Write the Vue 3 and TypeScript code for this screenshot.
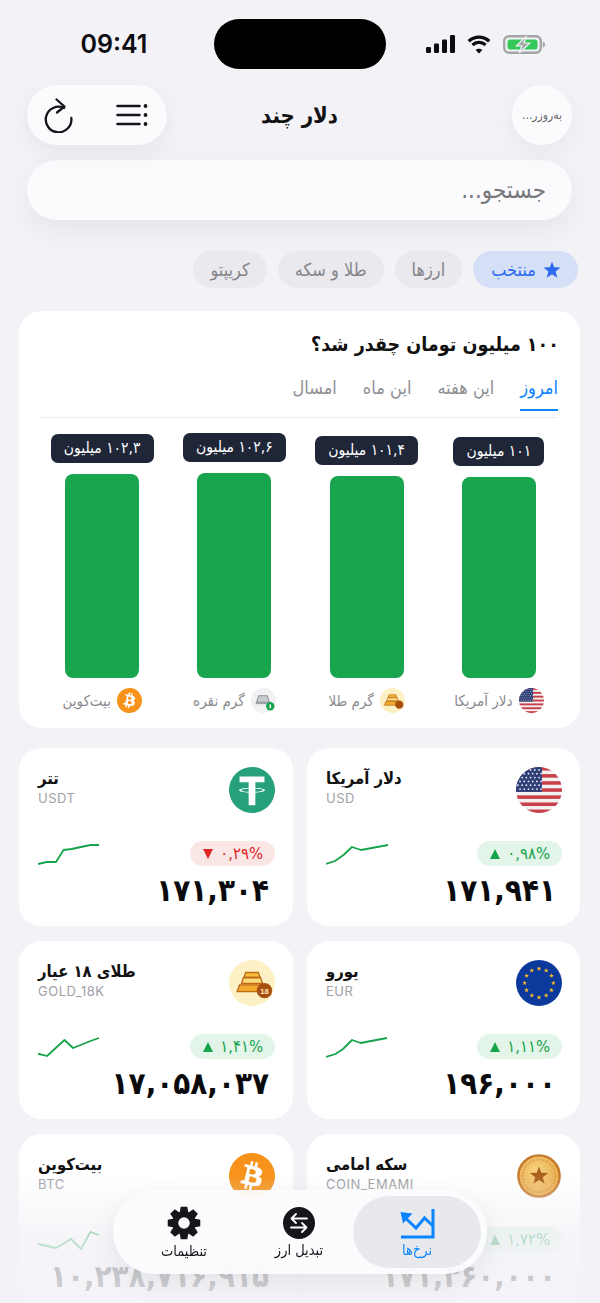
<template>
  <div class="screen" dir="rtl">
    <!-- shared icons, used by chart labels and rate cards -->
    <svg class="defs" aria-hidden="true">
      <defs>
        <clipPath id="round"><circle cx="24" cy="24" r="24" /></clipPath>
        <radialGradient id="coinFill" cx="45%" cy="40%" r="65%">
          <stop offset="0" stop-color="#f8d483" />
          <stop offset="1" stop-color="#e5a444" />
        </radialGradient>
      </defs>
      <symbol id="usd" viewBox="0 0 48 48">
        <g clip-path="url(#round)">
          <rect width="48" height="48" fill="#f4f1f1" />
          <rect v-for="y in [0, 7.4, 14.8, 22.2, 29.6, 37, 44.4]" :key="y" width="48" height="3.7" :y="y" fill="#c8414b" />
          <rect width="27" height="26" fill="#2f3f78" />
          <circle v-for="s in flagStars" :key="s.k" :cx="s.x" :cy="s.y" r="0.9" fill="#f4f4f8" />
        </g>
      </symbol>
      <symbol id="eur" viewBox="0 0 48 48">
        <circle cx="24" cy="24" r="24" fill="#0b3a9c" />
        <polygon v-for="s in euStars" :key="s.k" :points="s.points" fill="#f6b82a" />
      </symbol>
      <symbol id="usdt" viewBox="0 0 48 48">
        <circle cx="24" cy="24" r="24" fill="#26a17b" />
        <path d="M11 10h26v6H27.500v5.700c5.800.3 10 1.300 10 2.500s-4.200 2.200-10 2.500V40h-7V26.700c-5.800-.3-10-1.300-10-2.500s4.200-2.200 10-2.500V16H11z" fill="#fff" />
        <path d="M12.800 24.200c0-1 5-1.800 11.200-1.800s11.200.8 11.200 1.800-5 1.800-11.200 1.800-11.200-.8-11.200-1.800z" fill="#26a17b" />
        <rect x="20.500" y="22" width="7" height="5" fill="#fff" />
      </symbol>
      <symbol id="gold" viewBox="0 0 48 48">
        <circle cx="24" cy="24" r="24" fill="#fdf0c4" />
        <path d="M17.500 13h13l2 5h-17z" fill="#f6bd3f" stroke="#bd6a14" stroke-width="1.400" />
        <path d="M15 18.500h18l2 6H13z" fill="#fbd97d" stroke="#bd6a14" stroke-width="1.400" />
        <path d="M11 26h26l2.500 7h-31z" fill="#f2a92c" stroke="#bd6a14" stroke-width="1.400" />
        <circle cx="37" cy="32" r="8" fill="#a94f0e" />
      </symbol>
      <symbol id="silver" viewBox="0 0 48 48">
        <circle cx="24" cy="24" r="24" fill="#f0f1f3" />
        <path d="M15 15h16l5 14H10z" fill="#c9ccd1" stroke="#8d9198" stroke-width="2" />
        <rect x="10" y="26" width="26" height="5" fill="#9da1a8" />
        <circle cx="37" cy="35" r="8" fill="#16a34a" />
        <rect x="35.600" y="31" width="2.800" height="8" rx="1" fill="#fff" />
      </symbol>
      <symbol id="btc" viewBox="0 0 24 24">
        <circle cx="12" cy="12" r="11" fill="#fff" />
        <path fill="#f7931a" d="M23.638 14.904c-1.602 6.43-8.113 10.34-14.542 8.736C2.67 22.05-1.244 15.525.362 9.105 1.962 2.67 8.475-1.243 14.9.358c6.43 1.605 10.342 8.115 8.738 14.548v-.002zm-6.35-4.613c.24-1.59-.974-2.45-2.64-3.03l.54-2.153-1.315-.33-.525 2.107c-.345-.087-.705-.167-1.064-.25l.526-2.127-1.32-.33-.54 2.165c-.285-.067-.565-.132-.84-.2l-1.815-.45-.35 1.407s.975.225.955.236c.535.136.63.486.615.766l-1.477 5.92c-.075.166-.24.406-.614.314.015.02-.96-.24-.96-.24l-.66 1.51 1.71.426.93.242-.54 2.19 1.32.327.54-2.17c.36.1.705.19 1.05.273l-.51 2.154 1.32.33.545-2.19c2.24.427 3.93.257 4.64-1.774.57-1.637-.03-2.58-1.217-3.196.854-.193 1.5-.76 1.68-1.93h.01zm-3.01 4.22c-.404 1.64-3.157.75-4.05.53l.72-2.9c.896.23 3.757.67 3.33 2.37zm-.41-4.24c-.37 1.49-2.662.735-3.405.55l.654-2.64c.744.18 3.137.524 2.75 2.084v.006z" />
      </symbol>
      <symbol id="emami" viewBox="0 0 48 48">
        <circle cx="24" cy="24" r="21.500" fill="url(#coinFill)" stroke="#c47a2b" stroke-width="2.500" />
        <circle cx="24" cy="24" r="17" fill="none" stroke="#d08a35" stroke-width="1.200" stroke-dasharray="1.500 2" />
        <polygon :points="starPoints(24, 24, 10, 4.2)" fill="#a8601c" />
      </symbol>
    </svg>

    <div class="status" dir="ltr">
      <span class="time">09:41</span>
      <div class="island"></div>
      <div class="status-icons">
        <svg width="29" height="18" viewBox="0 0 29 18"><rect x="0" y="12" width="5" height="6" rx="1.200" /><rect x="8" y="8.500" width="5" height="9.500" rx="1.200" /><rect x="16" y="4.500" width="5" height="13.500" rx="1.200" /><rect x="24" y="0" width="5" height="18" rx="1.200" /></svg>
        <svg width="26" height="19" viewBox="0 0 26 19"><path d="M13 3.800c3.500 0 6.700 1.400 9.100 3.700l2.300-2.400A16.400 16.400 0 0 0 13 .5 16.400 16.400 0 0 0 1.600 5.100l2.300 2.400A13 13 0 0 1 13 3.800z" /><path d="M13 9.100c2.100 0 4 .8 5.400 2.100l2.300-2.400a11.100 11.100 0 0 0-15.400 0l2.300 2.400A7.800 7.800 0 0 1 13 9.100z" /><path d="M13 13.800c-1.300 0-2.400.5-3.300 1.300l3.300 3.500 3.300-3.500a4.700 4.700 0 0 0-3.300-1.300z" /></svg>
        <svg width="43" height="19" viewBox="0 0 43 19">
          <rect x="1.200" y="1.200" width="36.600" height="16.600" rx="5" fill="none" stroke="#a3a5a6" stroke-width="2.400" />
          <rect x="4.500" y="4.500" width="30" height="10" rx="2.500" fill="#34c759" />
          <path d="M39.800 6.500v6c1.400-.4 2.200-1.600 2.200-3s-.8-2.600-2.200-3z" fill="#a3a5a6" />
          <path d="M23.500 1 13.500 10.800h5.300L16.300 18 26.800 8h-5.700z" fill="#a3a5a6" stroke="#f2f2f7" stroke-width="1.200" />
        </svg>
      </div>
    </div>

    <header class="top-bar">
      <div class="top-start">
        <button class="update-btn">به‌روزر...</button>
      </div>
      <h1 class="app-title">دلار چند</h1>
      <div class="tools" dir="ltr">
        <svg class="tool-icon" width="30" height="36" viewBox="0 0 30 36" fill="none" stroke="#16161a" stroke-width="2.300" stroke-linecap="round" stroke-linejoin="round">
          <path d="M20 10.900A12.800 12.800 0 1 0 27.300 21" />
          <path d="M12.500 2.500 20.500 9.500 13 15.500" />
        </svg>
        <svg class="tool-icon" width="32" height="24" viewBox="0 0 32 24" stroke="#16161a" stroke-width="2.500" stroke-linecap="round">
          <path d="M1.500 3h22M1.500 12h22M1.500 21h22" />
          <circle cx="29.500" cy="3" r="1.900" fill="#16161a" stroke="none" />
          <circle cx="29.500" cy="12" r="1.900" fill="#16161a" stroke="none" />
          <circle cx="29.500" cy="21" r="1.900" fill="#16161a" stroke="none" />
        </svg>
      </div>
    </header>

    <div class="search"><span>جستجو...</span></div>

    <nav class="chips">
      <span v-for="c in chips" :key="c.label" class="chip" :class="{ on: c.on }">
        <svg v-if="c.on" width="18" height="18" viewBox="0 0 24 24"><polygon :points="starPoints(12, 12.5, 12, 5)" fill="#2f6bf0" /></svg>
        {{ c.label }}
      </span>
    </nav>

    <section class="convert-card">
      <h2 class="convert-title">۱۰۰ میلیون تومان چقدر شد؟</h2>
      <div class="tabs">
        <span v-for="(t, i) in tabs" :key="t" class="tab" :class="{ on: i === 0 }">{{ t }}</span>
      </div>
      <div class="bars">
        <div v-for="b in bars" :key="b.label" class="bar-col">
          <span class="bar-tag">{{ b.value }} میلیون</span>
          <div class="bar" :style="{ height: b.height + 'px' }"></div>
          <div class="bar-label">
            <svg width="25" height="25" viewBox="0 0 48 48"><use :href="'#' + b.icon" width="48" height="48" /></svg>
            <span>{{ b.label }}</span>
          </div>
        </div>
      </div>
    </section>

    <section class="rates">
      <article v-for="r in rates" :key="r.code" class="rate" dir="ltr">
        <div class="rate-head">
          <div class="rate-name">
            <strong dir="rtl">{{ r.name }}</strong>
            <small>{{ r.code }}</small>
          </div>
          <svg width="46" height="46" viewBox="0 0 48 48">
            <use :href="'#' + r.icon" width="48" height="48" />
            <text v-if="r.icon === 'gold'" x="37" y="35" text-anchor="middle" font-size="8" font-weight="700" fill="#ffe9bd" font-family="Liberation Sans, sans-serif">18</text>
          </svg>
        </div>
        <div class="rate-mid">
          <svg width="62" height="26" viewBox="0 0 62 26" fill="none"><polyline :points="r.spark" stroke="#16a34a" stroke-width="1.800" stroke-linejoin="round" /></svg>
          <span class="change" :class="{ down: r.down }">
            <i class="arrow"></i>{{ r.change }}%
          </span>
        </div>
        <div class="price">{{ r.price }}</div>
      </article>
    </section>

    <div class="fade"></div>

    <nav class="dock">
      <a class="dock-item active">
        <svg width="36" height="32" viewBox="0 0 36 32" fill="none" stroke="#0a84ff" stroke-width="3">
          <path d="M34 2v28H2" />
          <path d="M34 19 25.500 11 17 21 7 11.500" />
          <polygon points="1.500,5 13.500,6.500 4,16.500" fill="#0a84ff" stroke="none" />
        </svg>
        <span>نرخ‌ها</span>
      </a>
      <a class="dock-item swap">
        <svg width="32" height="32" viewBox="0 0 32 32" fill="none" stroke="#fff" stroke-width="1.800" stroke-linecap="round" stroke-linejoin="round">
          <circle cx="16" cy="16" r="16" fill="#16161a" stroke="none" />
          <path d="M24 11.500H8.500M13 7 8.500 11.500 13 16" />
          <path d="M8 20.500h15.500M19 16l4.500 4.500L19 25" />
        </svg>
        <span>تبدیل ارز</span>
      </a>
      <a class="dock-item settings">
        <svg width="34" height="34" viewBox="0 0 34 34"><path :d="gearPath" fill="#16161a" fill-rule="evenodd" /></svg>
        <span>تنظیمات</span>
      </a>
    </nav>
  </div>
</template>

<script setup lang="ts">
interface Rate {
  name: string
  code: string
  icon: string
  change: string
  down?: boolean
  price: string
  spark: string
}

const starPoints = (cx: number, cy: number, r: number, inner: number) => {
  const pts: string[] = []
  for (let i = 0; i < 10; i++) {
    const rad = i % 2 ? inner : r
    const a = (Math.PI / 5) * i - Math.PI / 2
    pts.push(`${(cx + rad * Math.cos(a)).toFixed(2)},${(cy + rad * Math.sin(a)).toFixed(2)}`)
  }
  return pts.join(' ')
}

const flagStars: { k: string; x: number; y: number }[] = []
for (let row = 0; row < 6; row++) {
  for (let col = 0; col < 6; col++) {
    flagStars.push({ k: `${row}-${col}`, x: 2 + col * 4.4 + (row % 2) * 2.2, y: 3 + row * 4 })
  }
}

const euStars = Array.from({ length: 12 }, (_, i) => {
  const a = (Math.PI / 6) * i
  return { k: i, points: starPoints(24 + 15 * Math.cos(a), 24 + 15 * Math.sin(a), 2.6, 1.1) }
})

// eight chunky teeth with a round hole
const buildGear = () => {
  const c = 17
  let d = ''
  for (let i = 0; i < 8; i++) {
    const a = (Math.PI / 4) * i - Math.PI / 2
    const p = (r: number, off: number) =>
      `${(c + r * Math.cos(a + off)).toFixed(2)} ${(c + r * Math.sin(a + off)).toFixed(2)}`
    d += `${i === 0 ? 'M' : 'L'}${p(11.8, -0.36)}L${p(16.6, -0.2)}L${p(16.6, 0.2)}L${p(11.8, 0.36)}`
  }
  return d + 'ZM17 11.2a5.8 5.8 0 1 0 0 11.6a5.8 5.8 0 1 0 0-11.6Z'
}
const gearPath = buildGear()

const chips = [
  { label: 'منتخب', on: true },
  { label: 'ارزها' },
  { label: 'طلا و سکه' },
  { label: 'کریپتو' }
]

const tabs = ['امروز', 'این هفته', 'این ماه', 'امسال']

const bars = [
  { value: '۱۰۱', height: 201, label: 'دلار آمریکا', icon: 'usd' },
  { value: '۱۰۱,۴', height: 202, label: 'گرم طلا', icon: 'gold' },
  { value: '۱۰۲,۶', height: 205, label: 'گرم نقره', icon: 'silver' },
  { value: '۱۰۲,۳', height: 204, label: 'بیت‌کوین', icon: 'btc' }
]

const rates: Rate[] = [
  { name: 'دلار آمریکا', code: 'USD', icon: 'usd', change: '۰,۹۸', price: '۱۷۱,۹۴۱', spark: '0,23 9,20 17.5,14 26,6 35,9 62,4' },
  { name: 'تتر', code: 'USDT', icon: 'usdt', change: '۰,۲۹', down: true, price: '۱۷۱,۳۰۴', spark: '0,23 8.5,21 18,21 25.5,9 33.5,8 52.5,4 61,4' },
  { name: 'یورو', code: 'EUR', icon: 'eur', change: '۱,۱۱', price: '۱۹۶,۰۰۰', spark: '0,23 9.5,20 17,15 26,6 34.5,9 61,4' },
  { name: 'طلای ۱۸ عیار', code: 'GOLD_18K', icon: 'gold', change: '۱,۴۱', price: '۱۷,۰۵۸,۰۳۷', spark: '0,19.7 9,22 26.5,6 35,14 52.5,7 61,4' },
  { name: 'سکه امامی', code: 'COIN_EMAMI', icon: 'emami', change: '۱,۷۲', price: '۱۷۱,۳۶۰,۰۰۰', spark: '0,23 17,20 26,14 35,10 61,4' },
  { name: 'بیت‌کوین', code: 'BTC', icon: 'btc', change: '۲,۳۸', price: '۱۰,۲۳۸,۷۱۶,۹۱۵', spark: '0,17 18,21 33,12 43,22 52.5,5 61,8' }
]
</script>

<style>
html,
body {
  margin: 0;
  background: #f2f2f7;
}
</style>

<style scoped>
.screen {
  position: relative;
  width: 600px;
  height: 1303px;
  overflow: hidden;
  background: #f2f2f7;
  font-family: "DejaVu Sans Condensed", "DejaVu Sans", sans-serif;
  color: #111;
}

.defs {
  position: absolute;
  width: 0;
  height: 0;
}

.status {
  display: grid;
  grid-template-columns: 1fr 172px 1fr;
  align-items: center;
  height: 50px;
  padding-top: 19px;
  margin-bottom: 16px;
}

.time {
  justify-self: center;
  padding-left: 14px;
  font: 600 25px Inter, sans-serif;
  color: #0c0c0e;
}

.island {
  height: 50px;
  border-radius: 25px;
  background: #000;
}

.status-icons {
  display: flex;
  align-items: center;
  gap: 11px;
  margin-left: 40px;
  fill: #0c0c0e;
}

.top-bar {
  display: grid;
  grid-template-columns: 1fr auto 1fr;
  align-items: center;
  height: 60px;
  padding: 0 28px 0 27px;
  margin-bottom: 15px;
}

.update-btn {
  display: block;
  width: 60px;
  height: 60px;
  padding: 0;
  border: 0;
  border-radius: 50%;
  background: #fbfbfe;
  box-shadow: 0 8px 26px rgba(0, 0, 0, 0.05);
  font: 12px "DejaVu Sans Condensed", sans-serif;
  color: #666;
  white-space: nowrap;
}

.app-title {
  margin: 0;
  font-size: 22px;
  font-weight: 700;
}

.tools {
  display: flex;
  justify-content: space-between;
  align-items: center;
  justify-self: end;
  width: 140px;
  height: 60px;
  box-sizing: border-box;
  padding: 0 19px 0 17px;
  border-radius: 30px;
  background: #fbfbfe;
  box-shadow: 0 8px 26px rgba(0, 0, 0, 0.06);
}

.search {
  display: flex;
  align-items: center;
  height: 60px;
  margin: 0 28px 31px 27px;
  padding: 0 26px;
  border-radius: 30px;
  background: #fbfbfe;
  box-shadow: 0 10px 30px rgba(0, 0, 0, 0.06);
  font-size: 24px;
  color: #77777c;
}

.chips {
  display: flex;
  gap: 11px;
  height: 37px;
  margin: 0 22px 23px 0;
}

.chip {
  display: flex;
  align-items: center;
  gap: 7px;
  padding: 0 17px;
  border-radius: 19px;
  background: #e9e9ee;
  font-size: 18px;
  color: #85858a;
}

.chip.on {
  padding: 0 17px 0 18px;
  background: #d5dff6;
  color: #2f6bf0;
}

.convert-card {
  height: 417px;
  box-sizing: border-box;
  margin: 0 20px 20px 19px;
  padding: 18px 15px 15px 17px;
  border-radius: 22px;
  background: #fff;
}

.convert-title {
  margin: 0 6px 12px;
  font-size: 19.500px;
  font-weight: 700;
  line-height: 32px;
}

.tabs {
  display: flex;
  gap: 26px;
  margin: 0 7px 0 5px;
  padding-top: 3px;
  padding-bottom: 6px;
  border-bottom: 1px solid #ececf0;
}

.tab {
  position: relative;
  font-size: 18px;
  line-height: 24px;
  padding-bottom: 11px;
  color: #8f8f94;
}

.tab.on {
  color: #0a84ff;
}

.tab.on::after {
  content: "";
  position: absolute;
  left: 0;
  right: 0;
  bottom: 0;
  height: 2.500px;
  background: #0a84ff;
}

.bars {
  display: grid;
  grid-template-columns: repeat(4, 1fr);
  align-items: end;
  height: 295px;
}

.bar-col {
  display: flex;
  flex-direction: column;
  align-items: center;
}

.bar-tag {
  height: 29px;
  line-height: 28px;
  padding: 0 13px;
  margin-bottom: 11px;
  border-radius: 7px;
  background: #1e2638;
  color: #fff;
  font-size: 15.500px;
  white-space: nowrap;
}

.bar {
  width: 74px;
  border-radius: 8px;
  background: #18a54d;
}

.bar-label {
  display: flex;
  align-items: center;
  gap: 6px;
  height: 25px;
  margin-top: 10px;
  font-size: 15px;
  color: #8a8a8f;
}

.rates {
  display: grid;
  grid-template-columns: 273px 274px;
  gap: 15px 14px;
  margin: 0 20px 0 19px;
}

.rate {
  height: 178px;
  box-sizing: border-box;
  padding: 19px 18px 0 19px;
  border-radius: 22px;
  background: #fff;
}

.rate-head {
  display: flex;
  justify-content: space-between;
  height: 46px;
  margin-bottom: 28px;
}

.rate-name {
  display: flex;
  flex-direction: column;
  align-items: flex-start;
}

.rate-name strong {
  font-size: 16.500px;
  font-weight: 600;
  line-height: 23px;
}

.rate-name small {
  font: 13px "Inter", sans-serif;
  letter-spacing: 0.5px;
  color: #a0a0a5;
}

.rate-mid {
  display: flex;
  justify-content: space-between;
  align-items: flex-start;
  height: 26px;
}

.change {
  display: flex;
  align-items: center;
  gap: 7px;
  height: 25px;
  padding: 0 12px 0 13px;
  border-radius: 13px;
  background: #e3f5e9;
  color: #16a34a;
  font-size: 16.500px;
}

.arrow {
  width: 0;
  height: 0;
  border: 5px solid transparent;
  border-top: 0;
  border-bottom: 10px solid currentColor;
}

.change.down {
  background: #fbe6e6;
  color: #dc2626;
}

.change.down .arrow {
  border-bottom: 0;
  border-top: 10px solid currentColor;
}

.price {
  margin-top: 3px;
  padding-right: 6px;
  text-align: right;
  white-space: nowrap;
  font-size: 31px;
  font-weight: 700;
  line-height: 40px;
  color: #0a0a0c;
}

.fade {
  position: absolute;
  left: 0;
  right: 0;
  top: 1175px;
  bottom: 0;
  background: linear-gradient(to bottom, rgba(242, 242, 247, 0) 0%, rgba(242, 242, 247, 0.74) 50%, rgba(242, 242, 247, 0.88) 100%);
  pointer-events: none;
}

.dock {
  position: absolute;
  left: 113px;
  top: 1190px;
  display: flex;
  width: 374px;
  height: 84px;
  box-sizing: border-box;
  padding: 6px;
  border-radius: 42px;
  background: rgba(252, 252, 254, 0.93);
  backdrop-filter: blur(2px);
  box-shadow: 0 8px 28px rgba(0, 0, 0, 0.07);
}

.dock-item {
  display: flex;
  flex-direction: column;
  align-items: center;
  justify-content: center;
  gap: 3px;
  font-size: 14.500px;
  color: #16161a;
}

.dock-item.active {
  width: 128px;
  border-radius: 36px;
  background: #e8e9ec;
  color: #0a84ff;
}

.dock-item.swap {
  width: 108px;
}

.dock-item.settings {
  width: 122px;
}
</style>
